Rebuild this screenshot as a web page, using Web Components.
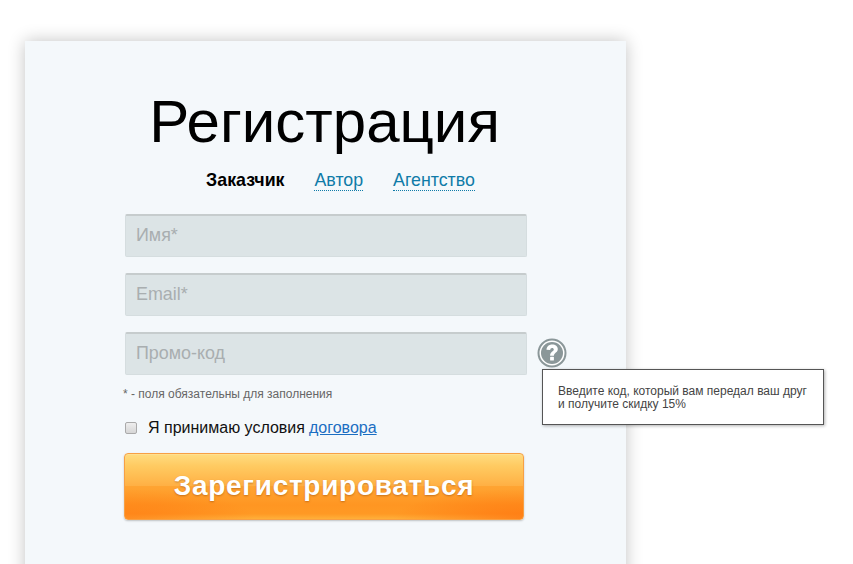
<!DOCTYPE html>
<html lang="ru">
<head>
<meta charset="UTF-8">
<title>Регистрация</title>
<style>
  html, body { margin: 0; height: 564px; overflow: hidden; background: #fff; }
  body { font-family: "Liberation Sans", Arial, sans-serif; }
</style>
</head>
<body>
<reg-page>
  <reg-card>
    <h-title slot="title">Регистрация</h-title>
    <reg-tab active>Заказчик</reg-tab>
    <reg-tab>Автор</reg-tab>
    <reg-tab>Агентство</reg-tab>
    <reg-field slot="form" placeholder="Имя*"></reg-field>
    <reg-field slot="form" placeholder="Email*"></reg-field>
    <reg-field slot="form" placeholder="Промо-код" hint="Введите код, который вам передал ваш друг<br>и получите скидку 15%"></reg-field>
  </reg-card>
</reg-page>

<script>
  class RegPage extends HTMLElement {
    constructor() {
      super();
      this.attachShadow({ mode: 'open' }).innerHTML = `
        <style>
          :host { display: block; padding: 41px 0 0 25px; }
        </style>
        <slot></slot>`;
    }
  }

  class HTitle extends HTMLElement {
    constructor() {
      super();
      this.attachShadow({ mode: 'open' }).innerHTML = `
        <style>
          :host { display: block; text-align: center; font-size: 60px; line-height: 72px; color: #000; padding-right: 2px; }
        </style>
        <slot></slot>`;
    }
  }

  class RegCard extends HTMLElement {
    constructor() {
      super();
      this.attachShadow({ mode: 'open' }).innerHTML = `
        <style>
          :host {
            display: block; box-sizing: border-box; width: 601px; height: 560px;
            padding-top: 45px; background: #f4f8fb;
            box-shadow: 0 0 16px rgba(0,0,0,.24);
          }
          .tabs { display: flex; justify-content: center; gap: 30px; margin-top: 12px; height: 34px; padding-left: 30px; }
          .form { display: flex; flex-direction: column; gap: 16px; margin: 10px 0 0 100px; }
          .note { margin: 11px 0 0 98px; font-size: 12px; line-height: 16px; color: #666; }
          .terms { display: flex; align-items: center; margin: 17px 0 0 100px; font-size: 16px; line-height: 18px; color: #111; }
          .box {
            box-sizing: border-box; width: 12px; height: 12px; margin-right: 11px;
            background: linear-gradient(#eee, #d6d6d6); border: 1px solid #aaa; border-radius: 2px;
          }
          a { color: #1b6ec2; text-decoration: underline; margin-left: 4px; }
          button {
            display: block; width: 400px; height: 67px; margin: 16px 0 0 99px; padding: 0 0 2px;
            font: bold 28px "Liberation Sans", Arial, sans-serif; letter-spacing: .72px; color: #fff;
            text-shadow: 0 1px 2px rgba(120,50,0,.4);
            border: 1px solid #f7a045; border-radius: 4px;
            background:
              radial-gradient(ellipse 130px 30px at 100% 100%, rgba(255,104,8,.6), rgba(255,104,8,0)),
              radial-gradient(ellipse 130px 30px at 0 100%, rgba(255,104,8,.45), rgba(255,104,8,0)),
              linear-gradient(#ffdc80 0%, #ffcb62 18%, #ffb044 49%, #ffa432 50%, #ff9622 78%, #ff9924 92%, #ffb03a 100%);
            box-shadow: 0 1px 2px rgba(0,0,0,.22), inset 0 1px 0 #ffe090;
          }
        </style>
        <slot name="title"></slot>
        <div class="tabs"><slot></slot></div>
        <div class="form"><slot name="form"></slot></div>
        <div class="note">* - поля обязательны для заполнения</div>
        <div class="terms"><span class="box"></span>Я принимаю условия <a href="#">договора</a></div>
        <button type="button">Зарегистрироваться</button>`;
    }
  }

  class RegTab extends HTMLElement {
    constructor() {
      super();
      this.attachShadow({ mode: 'open' }).innerHTML = `
        <style>
          :host { display: block; font-size: 17.8px; line-height: 20px; height: 20px; color: #0f7ba8; border-bottom: 1px dotted #0f7ba8; }
          :host([active]) { font-weight: bold; color: #000; border-bottom-color: transparent; }
        </style>
        <slot></slot>`;
    }
  }

  class RegField extends HTMLElement {
    constructor() {
      super();
      const hint = this.getAttribute('hint');
      this.attachShadow({ mode: 'open' }).innerHTML = `
        <style>
          :host { display: block; position: relative; width: 402px; }
          .input {
            box-sizing: border-box; height: 43px; padding: 0 10px; line-height: 39px;
            font-size: 17.9px; color: #a9aeb0; background: #dce4e6;
            border: 1px solid #d5dddf; border-top: 2px solid #c6cccd; border-radius: 2px;
          }
          svg { position: absolute; left: 412px; top: 6px; }
          .tip {
            position: absolute; left: 417px; top: 37px; box-sizing: border-box; width: 282px; height: 56px;
            padding: 15px 15px 0; background: #fff; border: 1px solid #555;
            box-shadow: 1px 1px 3px rgba(0,0,0,.3);
            font-size: 12px; line-height: 13px; color: #444; white-space: nowrap; z-index: 2;
          }
        </style>
        <div class="input">${this.getAttribute('placeholder')}</div>
        ${hint ? `<svg width="30" height="30" viewBox="0 0 30 30">
          <circle cx="15" cy="15" r="13.5" fill="#fff" stroke="#8b9799" stroke-width="2"/>
          <circle cx="15" cy="15" r="11" fill="#8b9799"/>
          <path d="M9.500 11.800c0-3.300 2.400-5.400 5.700-5.400 3.300 0 5.600 1.900 5.600 4.700 0 3.700-3.900 3.700-3.900 6.700h-3.800c0-4.300 3.700-4.400 3.700-6.300 0-1-.7-1.600-1.700-1.600-1.100 0-1.900.8-1.900 2.200z" fill="#fff"/>
          <rect x="13.100" y="18.700" width="3.800" height="3.800" rx=".6" fill="#fff"/>
        </svg>
        <div class="tip">${hint}</div>` : ''}`;
    }
  }

  customElements.define('reg-page', RegPage);
  customElements.define('h-title', HTitle);
  customElements.define('reg-card', RegCard);
  customElements.define('reg-tab', RegTab);
  customElements.define('reg-field', RegField);
</script>
</body>
</html>
